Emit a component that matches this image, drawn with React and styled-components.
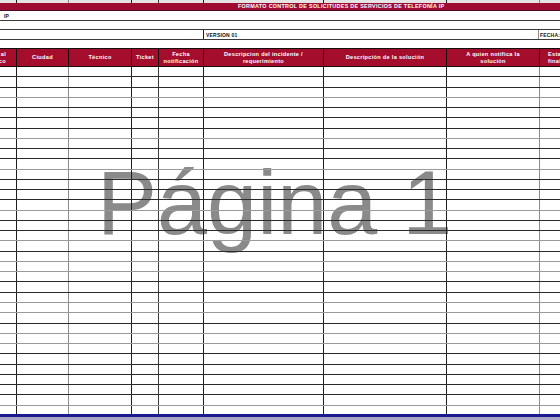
import styled, { createGlobalStyle } from 'styled-components';

const GlobalStyle = createGlobalStyle`
	html, body {
		margin: 0;
		padding: 0;
		background: #ffffff;
		overflow: hidden;
	}
`;

const columns = [
	{ w: 17, line: '#1e1e1e' },
	{ w: 52, line: '#8a8a8a' },
	{ w: 63, line: '#1e1e1e' },
	{ w: 27, line: '#3a3a3a' },
	{ w: 45, line: '#1e1e1e' },
	{ w: 120, line: '#1e1e1e' },
	{ w: 123, line: '#1e1e1e' },
	{ w: 93, line: '#8a8a8a' },
	{ w: 50, line: '#1e1e1e' },
];

const template = columns.map(c => `${c.w}px`).join(' ');

const headers = [
	['al', 'co'],
	['Ciudad'],
	['Técnico'],
	['Ticket'],
	['Fecha', 'notificación'],
	['Descripcion del incidente /', 'requerimiento'],
	['Descripción de la solución'],
	['A quien notifica la', 'solución'],
	['Estado', 'final'],
];

// row lines follow a 10.26px pitch from the header bottom
const rowHeights = Array.from(
	{ length: 34 },
	(_, i) => Math.round(66 + 10.26 * (i + 1)) - Math.round(66 + 10.26 * i)
);
const lightRows = [2, 6, 9, 13, 16, 18, 19, 22, 23, 25, 26, 32];

const App = () => {
	return (
		<>
			<GlobalStyle />
			<Page>
				<Strip>
					{columns.map((c, i) => (
						<StripCell key={i} $line={c.line} />
					))}
				</Strip>
				<TitleBar>FORMATO CONTROL DE SOLICITUDES DE SERVICIOS DE TELEFONÍA IP</TitleBar>
				<InfoRow $h={10}>
					<Clip>
						<SmallText>IP</SmallText>
					</Clip>
				</InfoRow>
				<InfoRow $h={9} />
				<VersionRow>
					<VersionBox />
					<VersionCell>
						<SmallText>VERSION 01</SmallText>
					</VersionCell>
					<DateCell>
						<SmallText>FECHA:</SmallText>
					</DateCell>
				</VersionRow>
				<InfoRow $h={9} $dark />
				<HeaderRow>
					{headers.map((lines, i) => (
						<HeaderCell key={i} $right={i === 0}>
							{lines.map((l, j) => (
								<span key={j}>{l}</span>
							))}
						</HeaderCell>
					))}
				</HeaderRow>
				<Body>
					<Watermark>Página 1</Watermark>
					<Rows>
						{rowHeights.map((h, r) => (
							<Row key={r} $h={h} $light={lightRows.includes(r)}>
								{columns.map((c, i) => (
									<Cell key={i} $line={c.line} />
								))}
							</Row>
						))}
					</Rows>
				</Body>
				<Outside />
			</Page>
		</>
	);
};

export default App;

const Page = styled.div`
	width: 560px;
	height: 420px;
	overflow: hidden;
	display: flex;
	flex-direction: column;
	font-family: 'Liberation Sans', Arial, sans-serif;
	color: #111;
`;

const Strip = styled.div`
	display: grid;
	grid-template-columns: ${template};
	height: 3px;
	background: #e4e4e4;
`;

const StripCell = styled.div`
	border-right: 1px solid ${p => p.$line};
`;

const TitleBar = styled.div`
	box-sizing: border-box;
	height: 8px;
	background: #9f0c32;
	border-bottom: 1px solid #4a0a2a;
	color: #ffffff;
	font-size: 5.4px;
	font-weight: bold;
	line-height: 7px;
	padding-left: 238px;
	white-space: nowrap;
	letter-spacing: 0.3px;
`;

const InfoRow = styled.div`
	box-sizing: border-box;
	height: ${p => p.$h}px;
	border-bottom: 1px solid ${p => (p.$dark ? '#111' : '#3a3a3a')};
	display: flex;
	align-items: center;
`;

const Clip = styled.div`
	width: 9px;
	overflow: hidden;
	display: flex;
	justify-content: flex-end;
`;

const SmallText = styled.span`
	font-size: 5px;
	font-weight: bold;
	white-space: nowrap;
	letter-spacing: 0.2px;
`;

const VersionRow = styled.div`
	box-sizing: border-box;
	height: 10px;
	border-bottom: 1px solid #3a3a3a;
	display: grid;
	grid-template-columns: 204px 335px 1fr;
`;

const VersionBox = styled.div`
	border-right: 1px solid #1e1e1e;
`;

const VersionCell = styled.div`
	border-right: 1px solid #8a8a8a;
	display: flex;
	align-items: center;
	padding-left: 2px;
`;

const DateCell = styled.div`
	display: flex;
	align-items: center;
	padding-left: 1px;
`;

const HeaderRow = styled.div`
	box-sizing: border-box;
	display: grid;
	grid-template-columns: ${template};
	height: 18px;
	background: #a50d2d;
	border-bottom: 1px solid #1a0a0a;
`;

const HeaderCell = styled.div`
	border-right: 1px solid #1a0a0a;
	display: flex;
	flex-direction: column;
	justify-content: center;
	align-items: ${p => (p.$right ? 'flex-end' : 'center')};
	padding-right: ${p => (p.$right ? '10px' : '0')};
	overflow: hidden;
	color: #ffffff;
	font-size: 5.6px;
	font-weight: bold;
	line-height: 7px;
	letter-spacing: 0.3px;
	white-space: nowrap;

	&:last-child {
		align-items: flex-start;
		padding-left: 8px;
	}
`;

const Body = styled.div`
	position: relative;
	box-sizing: border-box;
	height: 350px;
	overflow: hidden;
	border-bottom: 3px solid #1b1b8e;
`;

const Watermark = styled.div`
	position: absolute;
	left: 97px;
	top: 91px;
	font-family: 'Liberation Sans', Arial, sans-serif;
	font-size: 90px;
	line-height: 1;
	color: #8a8a8a;
	white-space: nowrap;
	z-index: 0;
`;

const Rows = styled.div`
	position: relative;
	z-index: 1;
	display: flex;
	flex-direction: column;
`;

const Row = styled.div`
	box-sizing: border-box;
	display: grid;
	grid-template-columns: ${template};
	height: ${p => p.$h}px;
	flex-shrink: 0;
	border-bottom: 1px solid ${p => (p.$light ? '#9a9a9a' : '#2a2a2a')};
`;

const Cell = styled.div`
	border-right: 1px solid ${p => p.$line};
`;

const Outside = styled.div`
	flex: 1;
	background: #a6a6c4;
`;
